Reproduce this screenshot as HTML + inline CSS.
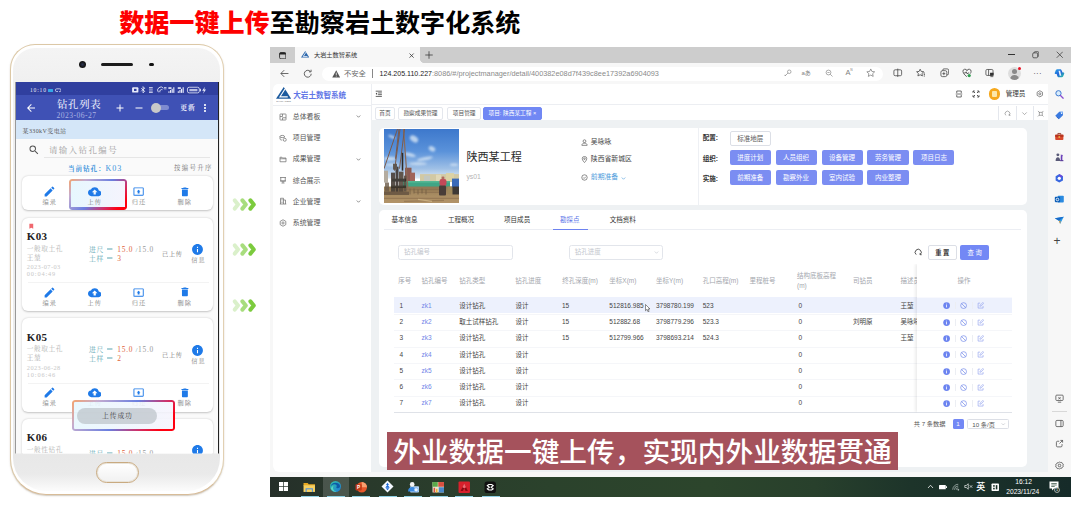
<!DOCTYPE html>
<html lang="zh-CN">
<head>
<meta charset="utf-8">
<title>数据一键上传至勘察岩土数字化系统</title>
<style>
*{box-sizing:border-box;margin:0;padding:0}
html,body{width:1080px;height:505px;overflow:hidden;background:#fff}
body{position:relative;font-family:"Liberation Sans","Noto Sans CJK SC",sans-serif;color:#333}
.abs{position:absolute}
.t{position:absolute;white-space:nowrap;line-height:1}
#title{left:119.2px;top:8px;font-size:25.08px;font-weight:700;letter-spacing:0;line-height:30px;color:#000}
#title b{color:#fe0000}

#phone{left:9.5px;top:44px;width:214.7px;height:450.5px;border-radius:25px 25px 36px 36px;background:#fff;border:1px solid #dcc8a6;border-right:1.400px solid #e2d0b2;border-bottom:1.4px solid #d8bc98;box-shadow:0 1px 1.5px rgba(120,100,70,.35)}
#panel{left:12.6px;top:47.6px;width:207.2px;height:443.6px;border-radius:22px 22px 33px 33px;background:linear-gradient(180deg,#f4f4f4 0,#f0f0f0 34px,#eaeaea 400px,#e8e8e8 408px,#eaeaea 426px,#f4f4f4 436px,#fcfcfc 443px)}
#screen{left:15px;top:81px;width:204px;height:372.6px;background:#fafafa;overflow:hidden;border-right:1px solid #222;border-left:.5px solid #999;clip-path:inset(1px 0 0 0);font-family:"Liberation Serif","Noto Serif CJK SC",serif}
#cam{left:78.500px;top:61px;width:7px;height:7px;border-radius:50%;background:radial-gradient(circle,#2a3350 0,#111 60%,#555 100%)}
#spk{left:101px;top:63px;width:32px;height:3px;border-radius:2px;background:#1c1c1c}
#sen{left:148.5px;top:63px;width:5px;height:3px;border-radius:2px;background:#111}
#home{left:95.5px;top:461.7px;width:43px;height:21px;border-radius:10.5px;border:1px solid #c9aa80;background:linear-gradient(180deg,#fff,#f1f1f1);box-shadow:inset 0 0 0 1px #e9e4da}
#screen .t{color:#777}
#sbar{left:0;top:0;width:203px;height:13.5px;background:#303f9f}
#abar{left:0;top:13.5px;width:203px;height:25.5px;background:#3f51b5}
#strip{left:0;top:39px;width:203px;height:18.7px;background:#d4e6f8}
.card{position:absolute;left:5.5px;width:191.5px;background:#fff;border-radius:6px;box-shadow:0 0.5px 2px rgba(0,0,0,.22)}
.ic{position:absolute;width:13px;height:13px;fill:#1f7ae8}
.lb{position:absolute;font-size:6.2px;color:#808080;white-space:nowrap;line-height:1;transform:translateX(-50%);letter-spacing:.9px}
.hl{position:absolute;border-radius:3px}
.hl::before{content:"";position:absolute;inset:0;border-radius:3px;padding:2.1px;background:linear-gradient(135deg,#f6a46c 0%,#c4acd0 20%,#6a7fe0 50%,#d03068 72%,#ff0010 88%,#ff0010 100%);-webkit-mask:linear-gradient(#000 0 0) content-box,linear-gradient(#000 0 0);-webkit-mask-composite:xor;mask-composite:exclude}
.arr{position:absolute;left:232px;width:24px;height:13px}


#win{left:270px;top:47px;width:801px;height:450px;background:#f7f7f7;overflow:hidden}
#win .t{color:#444}
#tabbar{left:0;top:0;width:801px;height:16.3px;background:#cdcdcd}
#atab{left:24.5px;top:0;width:125.1px;height:16.5px;background:#f7f7f7}
#atab::after{content:"";position:absolute;left:125.1px;top:12.3px;width:4px;height:4px;background:radial-gradient(circle at 100% 0,#cdcdcd 3.7px,#f7f7f7 4.1px)}
#tool{left:0;top:16.3px;width:801px;height:21px;background:#f7f7f7}
#addr{left:52.4px;top:19.7px;width:560.5px;height:14.6px;background:#fff;border-radius:7.3px}
#page{left:3px;top:37px;width:775px;height:388px;background:#eef1f3;border-radius:5px 0 0 6px;overflow:hidden}
#side{left:0;top:0;width:98px;height:388px;background:#fff}
#hdr{left:98px;top:0;width:677px;height:21.3px;background:#fff;border-bottom:.6px solid #eceef2;border-left:.6px solid #eceef2}
#tabs{left:98px;top:21.3px;width:677px;height:15px;background:#fff;border-left:.6px solid #eceef2}
.mi{position:absolute;left:19.8px;font-size:6.9px;color:#555;white-space:nowrap;line-height:1}
.mic{position:absolute;left:5.5px;width:8px;height:8px;stroke:#7a7a7a;fill:none;stroke-width:1.6}
.chev{position:absolute;left:83.1px;width:5px;height:5px;stroke:#555;fill:none;stroke-width:1.3}
.tb{position:absolute;top:23.3px;height:12.6px;border:.6px solid #e4e7ed;border-radius:2px;background:#fff;font-size:5.7px;color:#555;line-height:11.4px;text-align:center;white-space:nowrap}
.cardw{position:absolute;background:#fff;border-radius:5px}
.btn{position:absolute;width:41.2px;height:15.1px;border-radius:2px;background:#7b8df2;color:#fff;font-size:6.5px;line-height:15.1px;text-align:center;white-space:nowrap}
.th{position:absolute;font-size:6.5px;color:#a3a6ad;white-space:nowrap;line-height:1}
.td{position:absolute;font-size:6.5px;color:#444;white-space:nowrap;line-height:1}
.eic{position:absolute;left:784px;width:10.600px;height:10.600px}
#task{left:0;top:429.6px;width:801px;height:20px;background:linear-gradient(90deg,#252f29 0,#29392b 12%,#2b422c 35%,#2c452c 55%,#28402c 68%,#1d342a 80%,#162b29 100%)}
#cap{left:116.6px;top:384.6px;width:511.6px;height:38px;background:#a5525c;color:#fff;font-size:27.7px;font-weight:500;line-height:38px;padding-left:6.6px;padding-top:2.2px;overflow:hidden;white-space:nowrap;letter-spacing:0}

</style>
</head>
<body>
<div id="title" class="t"><b>数据一键上传</b>至勘察岩土数字化系统</div>
<div id="phone" class="abs"></div><div id="panel" class="abs"></div><div id="cam" class="abs"></div><div id="spk" class="abs"></div><div id="sen" class="abs"></div><div id="home" class="abs"></div>
<div id="screen" class="abs"><div id="sbar" class="abs"></div><div id="abar" class="abs"></div><div id="strip" class="abs"></div><div class="t" style="left:14px;top:6.6px;font-size:5.6px;color:#e4e7f7;letter-spacing:.8px">10:10</div><div class="abs" style="left:31.800px;top:7.700px;width:5.400px;height:3.200px;background:#35a7e8;border-radius:.5px"></div><svg class="abs" style="left:38.500px;top:7px;width:6.500px;height:4.600px" viewBox="0 0 13 9" fill="none" stroke="#e4e7f7" stroke-width="1.500"><path d="M3.500 1.500h6a2.500 2.500 0 0 1 0 5.500H8M6 7H3.500a2.500 2.500 0 0 1 0-5.500"/></svg><svg class="abs" style="left:115.700px;top:5px;width:74px;height:8px" viewBox="0 0 118 12.800" fill="#e8ebfa"><rect x="0" y="2" width="10" height="8.500" rx="1.500"/><rect x="3" y="4.500" width="4" height="3.500" fill="#303f9f"/><path d="M17.500 1l2.500 2.500-2.500 2.500 2.500 2.500-2.500 2.500V1zM14.500 3.500l5 5M14.500 8.500l5-5" stroke="#e8ebfa" stroke-width="1.300" fill="none"/><rect x="27" y="2" width="6" height="1.200"/><rect x="27" y="4.300" width="6" height="1.200"/><rect x="27" y="7.500" width="6" height="1.200"/><rect x="27" y="9.800" width="6" height="1.200"/><path d="M42 10a5 5 0 0 1 8-6.500M44.500 10a3 3 0 0 1 4-4" stroke="#e8ebfa" stroke-width="1.400" fill="none"/><rect x="51" y="2" width="4" height="1.200"/><rect x="51" y="4" width="4" height="1.200"/><rect x="58" y="2" width="5" height="2.600"/><rect x="58" y="8.500" width="1.800" height="2.500"/><rect x="60.600" y="6.500" width="1.800" height="4.500"/><rect x="63.200" y="4.500" width="1.800" height="6.500"/><rect x="65.800" y="2" width="1.800" height="9"/><rect x="73" y="2" width="5" height="2.600"/><rect x="73" y="8.500" width="1.800" height="2.500"/><rect x="75.600" y="6.500" width="1.800" height="4.500"/><rect x="78.200" y="4.500" width="1.800" height="6.500"/><rect x="80.800" y="2" width="1.800" height="9"/><rect x="88.500" y="2" width="19" height="9" rx="2.800" fill="none" stroke="#e8ebfa" stroke-width="1.300"/><rect x="91.500" y="4.600" width="13" height="3.800" rx="1" opacity=".75"/><rect x="108.500" y="4.500" width="1.500" height="4"/><path d="M116.500 1l-4.500 6.500h3l-1.500 5 4.800-7h-3z"/></svg><svg class="abs" style="left:9px;top:21px;width:12px;height:12px;fill:#fff" viewBox="0 0 24 24"><path d="M20 11H7.83l5.59-5.59L12 4l-8 8 8 8 1.41-1.41L7.83 13H20v-2z"/></svg><div class="t" style="left:41px;top:18.600px;font-size:10.400px;font-weight:500;color:#e9ecfa;letter-spacing:.7px">钻孔列表</div><div class="t" style="left:40.500px;top:31px;font-size:7.600px;color:#aab3e3;letter-spacing:.45px">2023-06-27</div><svg class="abs" style="left:98.200px;top:21px;width:12px;height:12px;fill:#fff" viewBox="0 0 24 24"><path d="M19 13h-6v6h-2v-6H5v-2h6V5h2v6h6v2z"/></svg><svg class="abs" style="left:116.700px;top:20.800px;width:12px;height:12px;fill:#fff" viewBox="0 0 24 24"><path d="M19 13H5v-2h14v2z"/></svg><div class="abs" style="left:139.500px;top:23.800px;width:13px;height:5.600px;border-radius:3px;background:#7f8bd0"></div><div class="abs" style="left:134.500px;top:21.700px;width:10px;height:10px;border-radius:50%;background:#c9c9c9"></div><div class="t" style="left:164.300px;top:23.800px;font-size:6.800px;font-weight:700;color:#e9ecfa;letter-spacing:.9px">更新</div><svg class="abs" style="left:183px;top:20.800px;width:12px;height:12px;fill:#fff" viewBox="0 0 24 24"><path d="M12 8c1.1 0 2-.9 2-2s-.9-2-2-2-2 .9-2 2 .9 2 2 2zm0 2c-1.1 0-2 .9-2 2s.9 2 2 2 2-.9 2-2-.9-2-2-2zm0 6c-1.1 0-2 .9-2 2s.9 2 2 2 2-.9 2-2-.9-2-2-2z"/></svg><div class="t" style="left:6.5px;top:46.500px;font-size:6px;color:#555;letter-spacing:.4px">某330kV变电站</div><svg class="abs" style="left:11.800px;top:62.500px;width:12px;height:12px;fill:#555" viewBox="0 0 24 24"><path d="M15.5 14h-.79l-.28-.27A6.471 6.471 0 0 0 16 9.500 6.500 6.500 0 1 0 9.500 16c1.610 0 3.090-.59 4.230-1.570l.27.28v.79l5 4.990L20.490 19l-4.990-5zm-6 0C7.010 14 5 11.990 5 9.500S7.010 5 9.500 5 14 7.010 14 9.500 11.990 14 9.500 14z"/></svg><div class="t" style="left:33px;top:65.5px;font-size:8.4px;color:#a0a0a0;letter-spacing:1.5px">请输入钻孔编号</div><div class="abs" style="left:27.5px;top:76.3px;width:166px;height:.6px;background:#e6e6e6"></div><div class="t" style="left:52px;top:83.800px;font-size:6.600px;font-weight:700;color:#3d94dc;letter-spacing:.9px">当前钻孔：<span style="font-size:8px;font-weight:400;letter-spacing:1px">K03</span></div><div class="t" style="left:158px;top:84px;font-size:6.400px;color:#777;letter-spacing:1.35px">按编号升序</div><div class="card" style="top:95px;height:34px"></div><div class="hl" style="left:53.3px;top:97.5px;width:58.1px;height:31px;background:linear-gradient(90deg,#e6f7fe,#f6f4fd)"></div><svg class="ic" style="left:27.0px;top:104.2px;width:13px;height:13px" viewBox="0 0 24 24"><path d="M3 17.25V21h3.75L17.81 9.94l-3.75-3.75L3 17.25zM20.71 7.04a.996.996 0 0 0 0-1.41l-2.34-2.34a.996.996 0 0 0-1.41 0l-1.83 1.83 3.75 3.75 1.83-1.83z"/></svg><div class="lb" style="left:33.7px;top:118.1px">编录</div><svg class="ic" style="left:71.8px;top:104.0px;width:13.4px;height:13.4px" viewBox="0 0 24 24"><path d="M19.35 10.04A7.49 7.49 0 0 0 12 4C9.11 4 6.6 5.64 5.35 8.04A5.994 5.994 0 0 0 0 14c0 3.31 2.69 6 6 6h13c2.76 0 5-2.24 5-5 0-2.64-2.05-4.78-4.65-4.96zM14 13v4h-4v-4H7l5-5 5 5h-3z"/></svg><div class="lb" style="left:78.7px;top:118.1px">上传</div><svg class="ic" style="left:117.1px;top:105.1px;width:11.2px;height:11.2px" viewBox="0 0 24 24"><path d="M21 3H3c-1.11 0-2 .89-2 2v14c0 1.11.89 2 2 2h18c1.11 0 2-.89 2-2V5c0-1.11-.89-2-2-2zm0 16.02H3V4.98h18v14.04zM10 12H8l4-4 4 4h-2v4h-4v-4z"/></svg><div class="lb" style="left:122.9px;top:118.1px">归还</div><svg class="ic" style="left:162.6px;top:104.8px;width:11.8px;height:11.8px" viewBox="0 0 24 24"><path d="M6 19c0 1.1.9 2 2 2h8c1.1 0 2-.9 2-2V7H6v12zM19 4h-3.5l-1-1h-5l-1 1H5v2h14V4z"/></svg><div class="lb" style="left:168.7px;top:118.1px">删除</div><div class="card" style="top:136.5px;height:93.5px"></div><div class="t" style="left:10.8px;top:150.1px;font-size:11px;font-weight:700;letter-spacing:.35px;color:#222">K03</div><div class="t" style="left:10.8px;top:164.7px;font-size:6.7px;color:#b0b0b0;letter-spacing:.55px">一般取土孔</div><div class="t" style="left:10.8px;top:173.7px;font-size:6.7px;color:#b0b0b0;letter-spacing:.55px">王堃</div><div class="t" style="left:10.8px;top:183.1px;font-size:6.3px;color:#c8c8c8;letter-spacing:.45px">2023-07-03</div><div class="t" style="left:10.8px;top:190.2px;font-size:6.3px;color:#c8c8c8;letter-spacing:.85px">00:04:49</div><div class="t" style="left:73px;top:164.5px;font-size:6.8px;letter-spacing:.7px;color:#5fa8b4">进尺 <span style="display:inline-block;transform:scale(1.7,1.3);margin:0 2px">=</span> <span style="color:#e0643c;font-size:7.4px">15.0</span> /<span style="color:#999;font-size:7.4px">15.0</span></div><div class="t" style="left:73px;top:173.5px;font-size:6.8px;letter-spacing:.7px;color:#5fa8b4">土样 <span style="display:inline-block;transform:scale(1.7,1.3);margin:0 2px">=</span> <span style="color:#e0643c;font-size:7.4px">3</span></div><div class="t" style="left:146px;top:170.0px;font-size:6.2px;letter-spacing:.7px;color:#777">已上传</div><svg class="ic" style="left:175.2px;top:162.0px" viewBox="0 0 24 24"><path d="M12 2C6.48 2 2 6.48 2 12s4.48 10 10 10 10-4.48 10-10S17.52 2 12 2zm1 15h-2v-6h2v6zm0-8h-2V7h2v2z"/></svg><div class="lb" style="left:182.4px;top:176.3px">信息</div><div class="abs" style="left:12px;top:201.0px;width:181px;height:.6px;background:#f3f3f3"></div><svg class="ic" style="left:27.0px;top:204.7px;width:13px;height:13px" viewBox="0 0 24 24"><path d="M3 17.25V21h3.75L17.81 9.94l-3.75-3.75L3 17.25zM20.71 7.04a.996.996 0 0 0 0-1.41l-2.34-2.34a.996.996 0 0 0-1.41 0l-1.83 1.83 3.75 3.75 1.83-1.83z"/></svg><div class="lb" style="left:33.7px;top:218.6px">编录</div><svg class="ic" style="left:71.8px;top:204.5px;width:13.4px;height:13.4px" viewBox="0 0 24 24"><path d="M19.35 10.04A7.49 7.49 0 0 0 12 4C9.11 4 6.6 5.64 5.35 8.04A5.994 5.994 0 0 0 0 14c0 3.31 2.69 6 6 6h13c2.76 0 5-2.24 5-5 0-2.64-2.05-4.78-4.65-4.96zM14 13v4h-4v-4H7l5-5 5 5h-3z"/></svg><div class="lb" style="left:78.7px;top:218.6px">上传</div><svg class="ic" style="left:117.1px;top:205.6px;width:11.2px;height:11.2px" viewBox="0 0 24 24"><path d="M21 3H3c-1.11 0-2 .89-2 2v14c0 1.11.89 2 2 2h18c1.11 0 2-.89 2-2V5c0-1.11-.89-2-2-2zm0 16.02H3V4.98h18v14.04zM10 12H8l4-4 4 4h-2v4h-4v-4z"/></svg><div class="lb" style="left:122.9px;top:218.6px">归还</div><svg class="ic" style="left:162.6px;top:205.3px;width:11.8px;height:11.8px" viewBox="0 0 24 24"><path d="M6 19c0 1.1.9 2 2 2h8c1.1 0 2-.9 2-2V7H6v12zM19 4h-3.5l-1-1h-5l-1 1H5v2h14V4z"/></svg><div class="lb" style="left:168.7px;top:218.6px">删除</div><svg class="abs" style="left:12.2px;top:142.2px;width:6.6px;height:6.6px;fill:#f0686e" viewBox="0 0 24 24"><path d="M5 3h14v18l-7-4-7 4z"/></svg><div class="card" style="top:237.1px;height:93.5px"></div><div class="t" style="left:10.8px;top:250.7px;font-size:11px;font-weight:700;letter-spacing:.35px;color:#222">K05</div><div class="t" style="left:10.8px;top:265.3px;font-size:6.7px;color:#b0b0b0;letter-spacing:.55px">一般取土孔</div><div class="t" style="left:10.8px;top:274.3px;font-size:6.7px;color:#b0b0b0;letter-spacing:.55px">王堃</div><div class="t" style="left:10.8px;top:283.7px;font-size:6.3px;color:#c8c8c8;letter-spacing:.45px">2023-06-28</div><div class="t" style="left:10.8px;top:290.8px;font-size:6.3px;color:#c8c8c8;letter-spacing:.85px">10:06:46</div><div class="t" style="left:73px;top:265.1px;font-size:6.8px;letter-spacing:.7px;color:#5fa8b4">进尺 <span style="display:inline-block;transform:scale(1.7,1.3);margin:0 2px">=</span> <span style="color:#e0643c;font-size:7.4px">15.0</span> /<span style="color:#999;font-size:7.4px">15.0</span></div><div class="t" style="left:73px;top:274.1px;font-size:6.8px;letter-spacing:.7px;color:#5fa8b4">土样 <span style="display:inline-block;transform:scale(1.7,1.3);margin:0 2px">=</span> <span style="color:#e0643c;font-size:7.4px">2</span></div><div class="t" style="left:146px;top:270.6px;font-size:6.2px;letter-spacing:.7px;color:#777">已上传</div><svg class="ic" style="left:175.2px;top:262.6px" viewBox="0 0 24 24"><path d="M12 2C6.48 2 2 6.48 2 12s4.48 10 10 10 10-4.48 10-10S17.52 2 12 2zm1 15h-2v-6h2v6zm0-8h-2V7h2v2z"/></svg><div class="lb" style="left:182.4px;top:276.9px">信息</div><div class="abs" style="left:12px;top:301.6px;width:181px;height:.6px;background:#f3f3f3"></div><svg class="ic" style="left:27.0px;top:305.3px;width:13px;height:13px" viewBox="0 0 24 24"><path d="M3 17.25V21h3.75L17.81 9.94l-3.75-3.75L3 17.25zM20.71 7.04a.996.996 0 0 0 0-1.41l-2.34-2.34a.996.996 0 0 0-1.41 0l-1.83 1.83 3.75 3.75 1.83-1.83z"/></svg><div class="lb" style="left:33.7px;top:319.2px">编录</div><svg class="ic" style="left:71.8px;top:305.1px;width:13.4px;height:13.4px" viewBox="0 0 24 24"><path d="M19.35 10.04A7.49 7.49 0 0 0 12 4C9.11 4 6.6 5.64 5.35 8.04A5.994 5.994 0 0 0 0 14c0 3.31 2.69 6 6 6h13c2.76 0 5-2.24 5-5 0-2.64-2.05-4.78-4.65-4.96zM14 13v4h-4v-4H7l5-5 5 5h-3z"/></svg><div class="lb" style="left:78.7px;top:319.2px">上传</div><svg class="ic" style="left:117.1px;top:306.2px;width:11.2px;height:11.2px" viewBox="0 0 24 24"><path d="M21 3H3c-1.11 0-2 .89-2 2v14c0 1.11.89 2 2 2h18c1.11 0 2-.89 2-2V5c0-1.11-.89-2-2-2zm0 16.02H3V4.98h18v14.04zM10 12H8l4-4 4 4h-2v4h-4v-4z"/></svg><div class="lb" style="left:122.9px;top:319.2px">归还</div><svg class="ic" style="left:162.6px;top:305.9px;width:11.8px;height:11.8px" viewBox="0 0 24 24"><path d="M6 19c0 1.1.9 2 2 2h8c1.1 0 2-.9 2-2V7H6v12zM19 4h-3.5l-1-1h-5l-1 1H5v2h14V4z"/></svg><div class="lb" style="left:168.7px;top:319.2px">删除</div><div class="card" style="top:337.8px;height:93.5px"></div><div class="t" style="left:10.8px;top:351.4px;font-size:11px;font-weight:700;letter-spacing:.35px;color:#222">K06</div><div class="t" style="left:10.8px;top:366.0px;font-size:6.7px;color:#b0b0b0;letter-spacing:.55px">一般性钻孔</div><div class="t" style="left:10.8px;top:375.0px;font-size:6.7px;color:#b0b0b0;letter-spacing:.55px">王堃</div><div class="t" style="left:10.8px;top:384.4px;font-size:6.3px;color:#c8c8c8;letter-spacing:.45px">2023-06-28</div><div class="t" style="left:10.8px;top:391.5px;font-size:6.3px;color:#c8c8c8;letter-spacing:.85px">10:30:12</div><div class="t" style="left:73px;top:369.4px;font-size:6.8px;letter-spacing:.7px;color:#5fa8b4">进尺 <span style="display:inline-block;transform:scale(1.7,1.3);margin:0 2px">=</span> <span style="color:#e0643c;font-size:7.4px">15.0</span> /<span style="color:#999;font-size:7.4px">15.0</span></div><div class="t" style="left:73px;top:378.4px;font-size:6.8px;letter-spacing:.7px;color:#5fa8b4">土样 <span style="display:inline-block;transform:scale(1.7,1.3);margin:0 2px">=</span> <span style="color:#e0643c;font-size:7.4px">2</span></div><div class="t" style="left:146px;top:374.9px;font-size:6.2px;letter-spacing:.7px;color:#777">已上传</div><svg class="ic" style="left:175.2px;top:363.3px" viewBox="0 0 24 24"><path d="M12 2C6.48 2 2 6.48 2 12s4.48 10 10 10 10-4.48 10-10S17.52 2 12 2zm1 15h-2v-6h2v6zm0-8h-2V7h2v2z"/></svg><div class="lb" style="left:182.4px;top:377.6px">信息</div><div class="abs" style="left:12px;top:402.3px;width:181px;height:.6px;background:#f3f3f3"></div><svg class="ic" style="left:27.0px;top:406.0px;width:13px;height:13px" viewBox="0 0 24 24"><path d="M3 17.25V21h3.75L17.81 9.94l-3.75-3.75L3 17.25zM20.71 7.04a.996.996 0 0 0 0-1.41l-2.34-2.34a.996.996 0 0 0-1.41 0l-1.83 1.83 3.75 3.75 1.83-1.83z"/></svg><div class="lb" style="left:33.7px;top:419.9px">编录</div><svg class="ic" style="left:71.8px;top:405.8px;width:13.4px;height:13.4px" viewBox="0 0 24 24"><path d="M19.35 10.04A7.49 7.49 0 0 0 12 4C9.11 4 6.6 5.64 5.35 8.04A5.994 5.994 0 0 0 0 14c0 3.31 2.69 6 6 6h13c2.76 0 5-2.24 5-5 0-2.64-2.05-4.78-4.65-4.96zM14 13v4h-4v-4H7l5-5 5 5h-3z"/></svg><div class="lb" style="left:78.7px;top:419.9px">上传</div><svg class="ic" style="left:117.1px;top:406.9px;width:11.2px;height:11.2px" viewBox="0 0 24 24"><path d="M21 3H3c-1.11 0-2 .89-2 2v14c0 1.11.89 2 2 2h18c1.11 0 2-.89 2-2V5c0-1.11-.89-2-2-2zm0 16.02H3V4.98h18v14.04zM10 12H8l4-4 4 4h-2v4h-4v-4z"/></svg><div class="lb" style="left:122.9px;top:419.9px">归还</div><svg class="ic" style="left:162.6px;top:406.6px;width:11.8px;height:11.8px" viewBox="0 0 24 24"><path d="M6 19c0 1.1.9 2 2 2h8c1.1 0 2-.9 2-2V7H6v12zM19 4h-3.5l-1-1h-5l-1 1H5v2h14V4z"/></svg><div class="lb" style="left:168.7px;top:419.9px">删除</div><div class="hl" style="left:56.2px;top:319.2px;width:103.2px;height:31.3px;background:linear-gradient(90deg,rgba(230,247,254,.88),rgba(246,244,253,.88))"></div><div class="abs" style="left:60.7px;top:326.8px;width:80.7px;height:16.2px;border-radius:8.1px;background:rgba(186,194,200,.7)"></div><div class="t" style="left:86px;top:332.2px;font-size:6.8px;color:#444;letter-spacing:.9px">上传成功</div></div>
<svg class="arr" style="top:197.6px" viewBox="0 0 24 13" fill="none" stroke-width="4" stroke-linecap="round" stroke-linejoin="round"><path d="M2.800 2.400L6 6.500 2.800 10.600" stroke="#daf0ca"/><path d="M10.400 2.400L13.800 6.500 10.400 10.600" stroke="#a8dd7e"/><path d="M18.400 2.400L21.800 6.500 18.400 10.600" stroke="#7ccb3e"/></svg><svg class="arr" style="top:243.4px" viewBox="0 0 24 13" fill="none" stroke-width="4" stroke-linecap="round" stroke-linejoin="round"><path d="M2.800 2.400L6 6.500 2.800 10.600" stroke="#daf0ca"/><path d="M10.400 2.400L13.800 6.500 10.400 10.600" stroke="#a8dd7e"/><path d="M18.400 2.400L21.800 6.500 18.400 10.600" stroke="#7ccb3e"/></svg><svg class="arr" style="top:298.8px" viewBox="0 0 24 13" fill="none" stroke-width="4" stroke-linecap="round" stroke-linejoin="round"><path d="M2.800 2.400L6 6.500 2.800 10.600" stroke="#daf0ca"/><path d="M10.400 2.400L13.800 6.500 10.400 10.600" stroke="#a8dd7e"/><path d="M18.400 2.400L21.800 6.500 18.400 10.600" stroke="#7ccb3e"/></svg>
<div id="win" class="abs"><div id="tabbar" class="abs"></div><div id="atab" class="abs"></div><svg class="abs" style="left:8.6px;top:4.8px;width:7.4px;height:7.4px" viewBox="0 0 16 16"><rect x="1.2" y="1.2" width="13.6" height="13.6" rx="3" fill="none" stroke="#222" stroke-width="1.8"/><path d="M1.2 5.5h13.6V4a2.8 2.8 0 0 0-2.8-2.8H4A2.8 2.8 0 0 0 1.2 4z" fill="#222"/></svg><svg class="abs" style="left:30.600px;top:4px;width:8.400px;height:7px" viewBox="0 0 30.400 25"><path d="M15.500 0L30.400 23.400H0z" fill="#2a66ac"/><path d="M18 4L8 19.600h15.500" fill="none" stroke="#fff" stroke-width="2.800"/></svg><div class="t" style="left:44px;top:4.8px;font-size:6.2px;color:#333">大岩土数智系统</div><svg class="abs" style="left:139.400px;top:5.800px;width:5.200px;height:5.200px" viewBox="0 0 10 10" fill="none" stroke="#333" stroke-width="1.500"><path d="M1 1l8 8M9 1l-8 8"/></svg><svg class="abs" style="left:155.200px;top:3.800px;width:8px;height:8px" viewBox="0 0 16 16" fill="none" stroke="#333" stroke-width="1.500"><path d="M8 .5v15M.5 8h15"/></svg><div class="abs" style="left:738px;top:7.300px;width:6.500px;height:.7px;background:#333"></div><svg class="abs" style="left:761.5px;top:4px;width:7.5px;height:7.5px" viewBox="0 0 16 16" fill="none" stroke="#333" stroke-width="1.5"><rect x="1.5" y="4" width="10.5" height="10.5" rx="2.5"/><path d="M4.5 4V3.5a2 2 0 0 1 2-2h6a2 2 0 0 1 2 2v6a2 2 0 0 1-2 2H12"/></svg><svg class="abs" style="left:785.5px;top:4px;width:7.5px;height:7.5px" viewBox="0 0 16 16" fill="none" stroke="#333" stroke-width="1.5"><path d="M1.5 1.5l13 13M14.5 1.5l-13 13"/></svg><div id="tool" class="abs"></div><div id="addr" class="abs"></div><svg class="abs" style="left:9.7px;top:22.2px;width:9px;height:9px" viewBox="0 0 16 16" fill="none" stroke="#444" stroke-width="1.4"><path d="M15 8H1.8M7.5 2L1.5 8l6 6"/></svg><svg class="abs" style="left:32.5px;top:22px;width:9.5px;height:9.5px" viewBox="0 0 16 16" fill="none" stroke="#444" stroke-width="1.4"><path d="M13.8 8a5.8 5.8 0 1 1-1.7-4.1"/><path d="M13.6 1.2v3.6H10" /></svg><svg class="abs" style="left:61.6px;top:22.8px;width:8.4px;height:7.8px" viewBox="0 0 16 15"><path d="M8 .5l7.6 14H.4z" fill="#555"/><rect x="7.3" y="5" width="1.4" height="5" fill="#fff"/><rect x="7.3" y="11" width="1.4" height="1.6" fill="#fff"/></svg><div class="t" style="left:74px;top:23.3px;font-size:7.3px;color:#6a6a6a">不安全</div><div class="abs" style="left:101.6px;top:22.4px;width:.7px;height:9px;background:#888"></div><div class="t" style="left:109.6px;top:23.2px;font-size:7.05px;color:#222">124.205.110.227<span style="color:#8a8a8a;font-size:7.33px">:8086/#/projectmanager/detail/400382e08d7f439c8ee17392a6904093</span></div><svg class="abs" style="left:513.8px;top:22.2px;width:8px;height:8px" viewBox="0 0 16 16" fill="none" stroke="#808080" stroke-width="1.3"><circle cx="10.5" cy="5.5" r="3.5"/><path d="M8 8L2 14v-2.5"/></svg><div class="t" style="left:531.6px;top:23.2px;font-size:6px;color:#808080;letter-spacing:-.3px">aあ</div><svg class="abs" style="left:554.6px;top:22.2px;width:8px;height:8px" viewBox="0 0 16 16" fill="none" stroke="#808080" stroke-width="1.3"><circle cx="7" cy="7" r="4.8"/><path d="M10.5 10.5L15 15M4.8 7h4.4"/></svg><div class="t" style="left:575.5px;top:22.4px;font-size:7.4px;color:#808080">A<span style="font-size:4.5px;vertical-align:top">ᴺ</span></div><svg class="abs" style="left:595.5px;top:21.4px;width:9.5px;height:9.5px" viewBox="0 0 16 16" fill="none" stroke="#808080" stroke-width="1.3"><path d="M8 1.6l2 4.3 4.6.5-3.4 3.2.9 4.6L8 11.9l-4.1 2.3.9-4.6L1.4 6.4 6 5.9z"/></svg><svg class="abs" style="left:623.0px;top:21.4px;width:9.5px;height:9.5px" viewBox="0 0 16 16" fill="none" stroke="#444" stroke-width="1.3"><rect x="1.5" y="3" width="13" height="10" rx="2.2"/><path d="M8 1v14"/></svg><svg class="abs" style="left:645.9px;top:21.4px;width:9.5px;height:9.5px" viewBox="0 0 16 16" fill="none" stroke="#444" stroke-width="1.3"><path d="M7 2l1.8 3.8 4.2.5-3 2.9.8 4.2L7 11.4l-3.8 2 .8-4.2-3-2.9 4.2-.5z"/><path d="M12.5 8.5h3M13 11h2.5M13 13.500h2.500"/></svg><svg class="abs" style="left:669.6px;top:21.4px;width:9.5px;height:9.5px" viewBox="0 0 16 16" fill="none" stroke="#444" stroke-width="1.3"><rect x="1.500" y="4.500" width="10" height="10" rx="2.5"/><path d="M4.500 4.500V3.800a2.300 2.300 0 0 1 2.300-2.300h5.400a2.300 2.300 0 0 1 2.300 2.300v5.400a2.300 2.300 0 0 1-2.300 2.300h-.7M6.500 7v5M4 9.500h5"/></svg><svg class="abs" style="left:692.1px;top:21.2px;width:10px;height:10px" viewBox="0 0 16 16" fill="none" stroke="#444" stroke-width="1.3"><path d="M8 14S1.500 9.800 1.500 5.600A3.300 3.300 0 0 1 8 4.500a3.300 3.300 0 0 1 6.500 1.100c0 1.200-.5 2.300-1.300 3.400"/><path d="M3 8h2.500l1.200-2 1.600 3.500L9.500 8h2"/><circle cx="11.500" cy="12" r="2.600" fill="#2e9e4f" stroke="none"/></svg><svg class="abs" style="left:715.2px;top:21.4px;width:9.5px;height:9.5px" viewBox="0 0 16 16" fill="none" stroke="#444" stroke-width="1.3"><rect x="1.500" y="2.500" width="12" height="10" rx="2"/><path d="M6 2.500v10"/><rect x="8.500" y="8" width="6" height="5" fill="#333" stroke="none"/><path d="M9 14.500h5" /></svg><div class="abs" style="left:737.8px;top:19.7px;width:13px;height:13px;border-radius:50%;background:#dedede;overflow:hidden"><div class="abs" style="left:4px;top:2.300px;width:5px;height:5px;border-radius:50%;background:#8a8a8a"></div><div class="abs" style="left:1.800px;top:8px;width:9.400px;height:8px;border-radius:4.500px 4.500px 0 0;background:#8a8a8a"></div></div><div class="abs" style="left:747.5px;top:19.6px;width:3.600px;height:3.600px;border-radius:50%;background:#e81123"></div><div class="t" style="left:763.2px;top:22.600px;font-size:8px;color:#444;letter-spacing:.2px">···</div><div id="page" class="abs"><div id="side" class="abs"></div><div id="hdr" class="abs"></div><div id="tabs" class="abs"></div><svg class="abs" style="left:2.900px;top:3px;width:16px;height:15px" viewBox="0 0 32 30"><path d="M15.500 0L30.400 23.400H0z" fill="#1c5a9e"/><path d="M18 4L8 19.600h15.500" fill="none" stroke="#fff" stroke-width="2.300"/><text x="0" y="29" font-size="4.600" fill="#777" textLength="30" lengthAdjust="spacingAndGlyphs" font-family="Liberation Sans,sans-serif">CHINAGEO</text></svg><div class="t" style="left:20.300px;top:8px;font-size:7.550px;font-weight:700;color:#6175e6">大岩土数智系统</div><div class="abs" style="left:0;top:21.300px;width:98px;height:.6px;background:#eceef2"></div><svg class="mic" style="top:28.9px" viewBox="0 0 16 16"><rect x="2" y="2" width="12" height="12" rx="1"/><path d="M2 7h5V2M7 14V9.500h7"/></svg><div class="mi" style="top:30.2px">总体看板</div><svg class="chev" style="top:30.4px" viewBox="0 0 10 10"><path d="M1.500 3l3.500 3.500L8.500 3"/></svg><svg class="mic" style="top:50.0px" viewBox="0 0 16 16"><ellipse cx="6.500" cy="5" rx="4.500" ry="2.200"/><path d="M2 5v5c0 1.200 2 2.200 4.500 2.200M11 5v2"/><circle cx="11.500" cy="11.500" r="3"/></svg><div class="mi" style="top:51.3px">项目管理</div><svg class="mic" style="top:71.1px" viewBox="0 0 16 16"><path d="M2 4.500h4l1 1.500h7v7.500H2zM2 7.500h12"/></svg><div class="mi" style="top:72.4px">成果管理</div><svg class="chev" style="top:72.6px" viewBox="0 0 10 10"><path d="M1.500 3l3.500 3.500L8.500 3"/></svg><svg class="mic" style="top:92.3px" viewBox="0 0 16 16"><path d="M2 3h12M3.500 3v7h9V3M2 10h12M8 10v4M5 14h6"/></svg><div class="mi" style="top:93.6px">综合展示</div><svg class="mic" style="top:113.4px" viewBox="0 0 16 16"><path d="M3 14V2.500h6V14M9 6h4v8M1.500 14h13M5 5h2M5 8h2M5 11h2"/></svg><div class="mi" style="top:114.7px">企业管理</div><svg class="chev" style="top:114.9px" viewBox="0 0 10 10"><path d="M1.500 3l3.500 3.500L8.500 3"/></svg><svg class="mic" style="top:134.5px" viewBox="0 0 16 16"><path d="M8 1.500l5.600 3.200v6.600L8 14.500l-5.600-3.200V4.700z"/><circle cx="8" cy="8" r="2.200"/></svg><div class="mi" style="top:135.8px">系统管理</div><svg class="abs" style="left:102.400px;top:6.400px;width:7.600px;height:7.600px" viewBox="0 0 16 16" fill="none" stroke="#333" stroke-width="1.600"><path d="M1.500 2.500h13M6.500 6.200h8M6.500 9.800h8M1.500 13.500h13"/><path d="M4.500 5.500L1.500 8l3 2.500z" fill="#333" stroke="none"/></svg><svg class="abs" style="left:682.2px;top:5.9px;width:8px;height:8px" viewBox="0 0 16 16" fill="none" stroke="#444" stroke-width="1.5"><path d="M3.500 6V2h9v4M3.500 10v4h9v-4M1.500 8h13"/></svg><svg class="abs" style="left:698.6px;top:5.9px;width:8px;height:8px" viewBox="0 0 16 16" fill="none" stroke="#444" stroke-width="1.5"><path d="M2 5.500V2h3.500M10.500 2H14v3.500M14 10.500V14h-3.500M5.500 14H2v-3.500M2.500 2.500L6 6M13.500 2.500L10 6M13.500 13.500L10 10M2.500 13.500L6 10" stroke-width="1.800"/></svg><div class="abs" style="left:715.8px;top:4.2px;width:11.400px;height:11.400px;border-radius:50%;background:#f6a81c"></div><div class="abs" style="left:718.9px;top:7.0px;width:5.200px;height:5.800px;border-radius:1px;background:#fce7a8"></div><div class="t" style="left:732.7px;top:6.600px;font-size:6.600px;color:#333">管理员</div><svg class="abs" style="left:762.6px;top:6.1px;width:7.6px;height:7.6px" viewBox="0 0 16 16" fill="none" stroke="#555" stroke-width="1.4"><path d="M8 1.500l5.600 3.200v6.600L8 14.500l-5.600-3.200V4.700z"/><circle cx="8" cy="8" r="2.200"/></svg><div class="tb" style="left:102.0px;width:20.0px">首页</div><div class="tb" style="left:125.0px;width:45.0px">勘察成果管理</div><div class="tb" style="left:173.9px;width:34.6px">项目管理</div><div class="tb" style="left:210.2px;width:58.500px;background:#7188f4;border-color:#7188f4;color:#fff">项目: 陕西某工程 ×</div><div class="abs" style="left:725.4px;top:21.900px;width:.6px;height:14.400px;background:#e4e7ed"></div><div class="abs" style="left:742.6px;top:21.900px;width:.6px;height:14.400px;background:#e4e7ed"></div><div class="abs" style="left:759.5px;top:21.900px;width:.6px;height:14.400px;background:#e4e7ed"></div><svg class="abs" style="left:730.5px;top:26.2px;width:7px;height:7px" viewBox="0 0 16 16" fill="none" stroke="#777" stroke-width="1.3"><path d="M4.200 12.200A5.500 5.500 0 1 1 11.800 12.200"/><path d="M11.800 9v3.400h3" stroke-width="1.200"/></svg><svg class="abs" style="left:747.5px;top:26.2px;width:7px;height:7px" viewBox="0 0 16 16" fill="none" stroke="#777" stroke-width="1.3"><path d="M3 5.500l5 5 5-5"/></svg><svg class="abs" style="left:764.1px;top:26.0px;width:7.4px;height:7.4px" viewBox="0 0 16 16" fill="none" stroke="#777" stroke-width="1.3"><path d="M2 2l3 3M14 2l-3 3M2 14l3-3M14 14l-3-3"/><rect x="4.800" y="4.800" width="6.400" height="6.400"/></svg><div class="cardw" style="left:106px;top:44px;width:648.400px;height:77px"></div><svg class="abs" style="left:111px;top:44.600px;width:75px;height:74.400px" viewBox="0 0 75 75" preserveAspectRatio="none">
<defs><linearGradient id="sky" x1="0" y1="0" x2="0" y2="1"><stop offset="0" stop-color="#3d78cc"/><stop offset=".45" stop-color="#5a92da"/><stop offset=".8" stop-color="#9fc0e6"/><stop offset="1" stop-color="#dfeaf4"/></linearGradient>
<linearGradient id="gnd" x1="0" y1="0" x2="0" y2="1"><stop offset="0" stop-color="#8f7752"/><stop offset=".5" stop-color="#a88c62"/><stop offset="1" stop-color="#b39468"/></linearGradient>
<filter id="bl" x="-20%" y="-20%" width="140%" height="140%"><feGaussianBlur stdDeviation="1.100"/></filter><filter id="bl2" x="-10%" y="-10%" width="120%" height="120%"><feGaussianBlur stdDeviation=".45"/></filter></defs>
<rect width="75" height="50" fill="url(#sky)"/>
<g filter="url(#bl)" fill="#d4e4f4" opacity=".8"><ellipse cx="30" cy="10" rx="4.500" ry="3" transform="rotate(35 30 10)"/><ellipse cx="48" cy="20" rx="3.500" ry="2.500" transform="rotate(30 48 20)"/><ellipse cx="41" cy="30" rx="8" ry="1.600" transform="rotate(-12 41 30)"/><ellipse cx="26" cy="26" rx="6" ry="1.800" transform="rotate(15 26 26)"/><ellipse cx="34" cy="35" rx="9" ry="1.500"/><ellipse cx="6" cy="30" rx="6" ry="2"/><ellipse cx="8" cy="36" rx="7" ry="1.500"/><ellipse cx="70" cy="36" rx="4" ry="1.300"/><ellipse cx="8" cy="8" rx="4" ry="1.300" transform="rotate(25 8 8)"/></g>
<g filter="url(#bl2)">
<rect x="36" y="45.500" width="39" height="8" fill="#d2c9a4"/><rect x="40" y="47" width="6" height="6" fill="#c4c8c0"/><rect x="52" y="46" width="5" height="7" fill="#e0d8b8"/><rect x="62" y="44.500" width="8" height="8" fill="#dcd2a4"/>
<rect x="21" y="39" width="6.500" height="15" fill="#8a5a52"/><rect x="26" y="44" width="5" height="10" fill="#a06458"/><rect x="0" y="42" width="4" height="12" fill="#b4aca0"/>
<rect x="19" y="52.500" width="47" height="6.500" fill="#3fa585"/><rect x="19" y="52.500" width="47" height="1.500" fill="#57b894"/>
<rect x="0" y="58" width="75" height="17" fill="url(#gnd)"/>
<path d="M22 61h40M30 64h30M0 70h75M20 73l40-1" stroke="#86694a" stroke-width="1.300" opacity=".55"/>
<path d="M34 71l14 2" stroke="#c8ae80" stroke-width="1.200"/>
<path d="M13.500 0L0 40M16 0L10.500 42M15 0l-3.500 30" stroke="#7a5a4c" stroke-width="1" fill="none"/><path d="M19.500 0l4.500 62" stroke="#8a6a58" stroke-width="1.200"/><path d="M20.500 0l-5 40" stroke="#7a5a4c" stroke-width="1"/>
<path d="M18.500 24v18" stroke="#2e2a28" stroke-width="1.600"/>
<g opacity=".9"><rect x="7" y="44" width="4" height="20" fill="#4a4038"/><rect x="11.500" y="38" width="3" height="27" fill="#3e3630"/><rect x="15" y="43" width="4.500" height="22" fill="#54463a"/><rect x="20" y="47" width="2.500" height="16" fill="#5e5044"/><rect x="8" y="50" width="14" height="3" fill="#2e2a26"/><rect x="7" y="57" width="15" height="2.500" fill="#342e28"/><rect x="9" y="35" width="4" height="6" fill="#5a5048"/></g><rect x="0" y="63" width="25" height="3.500" fill="#6e5a44"/><rect x="1" y="54" width="4" height="9" fill="#6a5a48" opacity=".8"/><path d="M26 60v6M30 60v5M34 61v5M38 60v5M42 61v5" stroke="#7a6448" stroke-width="1"/>
<rect x="55.500" y="50.500" width="7" height="7" rx="2.200" fill="#c44a58"/><circle cx="59" cy="49.500" r="1.500" fill="#b06a60"/><rect x="55" y="57" width="7" height="10" rx="1" fill="#4a3e38"/>
<rect x="63.500" y="58" width="4.500" height="7" fill="#a08a5c"/><rect x="68" y="50" width="7" height="9" fill="#3a6ab8"/><rect x="68.500" y="58" width="6.500" height="8" fill="#3c3834"/>
</g>
</svg><div class="t" style="left:193.400px;top:67.600px;font-size:11.100px;color:#2b2b2b">陕西某工程</div><div class="t" style="left:193.400px;top:89.600px;font-size:6.800px;color:#b4b4b4">ys01</div><div class="abs" style="left:425.2px;top:44px;width:.6px;height:77px;background:#eef0f4"></div><svg class="abs" style="left:307.8px;top:54.7px;width:7px;height:7px" viewBox="0 0 16 16" fill="none" stroke="#555" stroke-width="1.500"><circle cx="8" cy="5" r="3.200"/><path d="M2 14.500c0-3.500 2.500-5 6-5s6 1.500 6 5z"/></svg><div class="t" style="left:317.8px;top:54.7px;font-size:6.850px;color:#444">吴咏咏</div><svg class="abs" style="left:307.8px;top:72.0px;width:7px;height:7px" viewBox="0 0 16 16" fill="none" stroke="#555" stroke-width="1.500"><path d="M8 15S2.800 9.800 2.800 6.200a5.200 5.200 0 0 1 10.400 0C13.200 9.800 8 15 8 15z"/><circle cx="8" cy="6.200" r="1.800"/></svg><div class="t" style="left:317.8px;top:72.2px;font-size:6.850px;color:#444">陕西省新城区</div><svg class="abs" style="left:307.8px;top:89.9px;width:7px;height:7px" viewBox="0 0 16 16" fill="none" stroke="#555" stroke-width="1.500"><circle cx="8" cy="8" r="6.200"/><path d="M5 8l2.200 2.200L11 6.300"/></svg><div class="t" style="left:317.8px;top:90.3px;font-size:6.850px;color:#4f9ddc">前期准备</div><svg class="abs" style="left:348.3px;top:91.8px;width:5px;height:5px" viewBox="0 0 10 10" fill="none" stroke="#4f9ddc" stroke-width="1.300"><path d="M1.500 3l3.500 3.500L8.500 3"/></svg><div class="t" style="left:429.7px;top:51.2px;font-size:6.600px;font-weight:700;color:#333">配置:</div><div class="t" style="left:429.7px;top:71.8px;font-size:6.600px;font-weight:700;color:#333">组织:</div><div class="t" style="left:429.7px;top:91.5px;font-size:6.600px;font-weight:700;color:#333">实施:</div><div class="btn" style="left:456.6px;top:46.6px;background:#fff;border:.6px solid #dcdfe6;color:#555;line-height:14px">标准地层</div><div class="btn" style="left:456.6px;top:66.4px">进度计划</div><div class="btn" style="left:502.5px;top:66.4px">人员组织</div><div class="btn" style="left:548.5px;top:66.4px">设备管理</div><div class="btn" style="left:594.4px;top:66.4px">劳务管理</div><div class="btn" style="left:640.3px;top:66.4px">项目日志</div><div class="btn" style="left:456.6px;top:86.2px">前期准备</div><div class="btn" style="left:502.5px;top:86.2px">勘察外业</div><div class="btn" style="left:548.5px;top:86.2px">室内试验</div><div class="btn" style="left:594.4px;top:86.2px">内业整理</div><div class="cardw" style="left:106px;top:125.600px;width:648.400px;height:257.400px"></div><div class="t" style="left:118.4px;top:132.5px;font-size:6.550px;color:#333">基本信息</div><div class="t" style="left:174.9px;top:132.5px;font-size:6.550px;color:#333">工程概况</div><div class="t" style="left:231.0px;top:132.5px;font-size:6.550px;color:#333">项目成员</div><div class="t" style="left:287.0px;top:132.5px;font-size:6.550px;color:#5b73e8">勘探点</div><div class="t" style="left:336.7px;top:132.5px;font-size:6.550px;color:#333">文档资料</div><div class="abs" style="left:111.0px;top:145.1px;width:637px;height:.7px;background:#eceef3"></div><div class="abs" style="left:280.0px;top:144.8px;width:34.500px;height:1.100px;background:#6d82f0"></div><div class="abs" style="left:125.4px;top:161.2px;width:114.200px;height:14.800px;border:.7px solid #e2e5eb;border-radius:2.500px;background:#fff"></div><div class="t" style="left:131.0px;top:165.3px;font-size:6.500px;color:#c3c6cd">钻孔编号</div><div class="abs" style="left:295.9px;top:161.2px;width:94.100px;height:14.800px;border:.7px solid #e2e5eb;border-radius:2.500px;background:#fff"></div><div class="t" style="left:301.8px;top:165.3px;font-size:6.500px;color:#c3c6cd">钻孔进度</div><svg class="abs" style="left:380.5px;top:166.4px;width:5px;height:5px" viewBox="0 0 10 10" fill="none" stroke="#c0c4cc" stroke-width="1.200"><path d="M1.500 3l3.500 3.500L8.500 3"/></svg><svg class="abs" style="left:640.5px;top:163.6px;width:8.4px;height:8.4px" viewBox="0 0 16 16" fill="none" stroke="#333" stroke-width="1.6"><path d="M4.200 12.600A5.800 5.800 0 1 1 11.800 12.600"/><path d="M11.600 9.400v3.400h3.200" stroke-width="1.300"/></svg><div class="abs" style="left:654.6px;top:160.7px;width:29.300px;height:15.500px;border:.7px solid #dcdfe6;border-radius:2px;background:#fff;font-size:6.300px;font-weight:700;letter-spacing:1.600px;text-indent:1.600px;line-height:14.200px;text-align:center;color:#333">重置</div><div class="abs" style="left:687.0px;top:160.7px;width:29.300px;height:15.500px;border-radius:2px;background:#7388f5;font-size:6.300px;letter-spacing:1.600px;text-indent:1.600px;line-height:15.500px;text-align:center;color:#fff">查询</div><div class="th" style="left:125.2px;top:193.5px">序号</div><div class="th" style="left:148.5px;top:193.5px">钻孔编号</div><div class="th" style="left:186.2px;top:193.5px">钻孔类型</div><div class="th" style="left:242.2px;top:193.5px">钻孔进度</div><div class="th" style="left:289.2px;top:193.5px">终孔深度(m)</div><div class="th" style="left:336.3px;top:193.5px">坐标X(m)</div><div class="th" style="left:383.0px;top:193.5px">坐标Y(m)</div><div class="th" style="left:429.7px;top:193.5px">孔口高程(m)</div><div class="th" style="left:476.4px;top:193.5px">里程桩号</div><div class="th" style="left:580.0px;top:193.5px">司钻员</div><div class="th" style="left:627.6px;top:193.5px">描述员</div><div class="th" style="left:524.0px;top:188.7px">结构底板高程</div><div class="th" style="left:524.0px;top:199.0px">(m)</div><div class="abs" style="left:120.9px;top:213.2px;width:618.400px;height:16.300px;background:#edf1fd"></div><div class="td" style="left:126.5px;top:218.6px;color:#444">1</div><div class="td" style="left:148.6px;top:218.6px;color:#7086e8">zk1</div><div class="td" style="left:186.2px;top:218.6px;color:#444">设计钻孔</div><div class="td" style="left:242.4px;top:218.6px;color:#444">设计</div><div class="td" style="left:289.0px;top:218.6px;color:#444">15</div><div class="td" style="left:336.3px;top:218.6px;color:#444">512816.985</div><div class="td" style="left:383.0px;top:218.6px;color:#444">3798780.199</div><div class="td" style="left:429.7px;top:218.6px;color:#444">523</div><div class="td" style="left:525.5px;top:218.6px;color:#444">0</div><div class="td" style="left:627.6px;top:218.6px;color:#444">王堃</div><div class="td" style="left:126.5px;top:234.9px;color:#444">2</div><div class="td" style="left:148.6px;top:234.9px;color:#7086e8">zk2</div><div class="td" style="left:186.2px;top:234.9px;color:#444">取土试样钻孔</div><div class="td" style="left:242.4px;top:234.9px;color:#444">设计</div><div class="td" style="left:289.0px;top:234.9px;color:#444">15</div><div class="td" style="left:336.3px;top:234.9px;color:#444">512882.68</div><div class="td" style="left:383.0px;top:234.9px;color:#444">3798779.296</div><div class="td" style="left:429.7px;top:234.9px;color:#444">523.3</div><div class="td" style="left:525.5px;top:234.9px;color:#444">0</div><div class="td" style="left:580.0px;top:234.9px;color:#444">刘明原</div><div class="td" style="left:627.6px;top:234.9px;color:#444">吴咏咏</div><div class="abs" style="left:120.9px;top:230.0px;width:618.400px;height:.6px;background:#f5f6f9"></div><div class="td" style="left:126.5px;top:251.2px;color:#444">3</div><div class="td" style="left:148.6px;top:251.2px;color:#7086e8">zk3</div><div class="td" style="left:186.2px;top:251.2px;color:#444">设计钻孔</div><div class="td" style="left:242.4px;top:251.2px;color:#444">设计</div><div class="td" style="left:289.0px;top:251.2px;color:#444">15</div><div class="td" style="left:336.3px;top:251.2px;color:#444">512799.966</div><div class="td" style="left:383.0px;top:251.2px;color:#444">3798693.214</div><div class="td" style="left:429.7px;top:251.2px;color:#444">524.3</div><div class="td" style="left:525.5px;top:251.2px;color:#444">0</div><div class="td" style="left:627.6px;top:251.2px;color:#444">王堃</div><div class="abs" style="left:120.9px;top:246.3px;width:618.400px;height:.6px;background:#f5f6f9"></div><div class="td" style="left:126.5px;top:267.5px;color:#444">4</div><div class="td" style="left:148.6px;top:267.5px;color:#7086e8">zk4</div><div class="td" style="left:186.2px;top:267.5px;color:#444">设计钻孔</div><div class="td" style="left:242.4px;top:267.5px;color:#444">设计</div><div class="td" style="left:525.5px;top:267.5px;color:#444">0</div><div class="abs" style="left:120.9px;top:262.6px;width:618.400px;height:.6px;background:#f5f6f9"></div><div class="td" style="left:126.5px;top:283.8px;color:#444">5</div><div class="td" style="left:148.6px;top:283.8px;color:#7086e8">zk5</div><div class="td" style="left:186.2px;top:283.8px;color:#444">设计钻孔</div><div class="td" style="left:242.4px;top:283.8px;color:#444">设计</div><div class="td" style="left:525.5px;top:283.8px;color:#444">0</div><div class="abs" style="left:120.9px;top:278.9px;width:618.400px;height:.6px;background:#f5f6f9"></div><div class="td" style="left:126.5px;top:300.1px;color:#444">6</div><div class="td" style="left:148.6px;top:300.1px;color:#7086e8">zk6</div><div class="td" style="left:186.2px;top:300.1px;color:#444">设计钻孔</div><div class="td" style="left:242.4px;top:300.1px;color:#444">设计</div><div class="td" style="left:525.5px;top:300.1px;color:#444">0</div><div class="abs" style="left:120.9px;top:295.2px;width:618.400px;height:.6px;background:#f5f6f9"></div><div class="td" style="left:126.5px;top:316.4px;color:#444">7</div><div class="td" style="left:148.6px;top:316.4px;color:#7086e8">zk7</div><div class="td" style="left:186.2px;top:316.4px;color:#444">设计钻孔</div><div class="td" style="left:242.4px;top:316.4px;color:#444">设计</div><div class="td" style="left:525.5px;top:316.4px;color:#444">0</div><div class="abs" style="left:120.9px;top:311.5px;width:618.400px;height:.6px;background:#f5f6f9"></div><div class="abs" style="left:120.9px;top:328.4px;width:618.400px;height:.7px;background:#dfe2e8"></div><div class="abs" style="left:643.5px;top:180.0px;width:95.800px;height:148.400px;background:linear-gradient(#fff,#fff) 0 0/100% 33.600px no-repeat,linear-gradient(#edf1fd,#edf1fd) 0 33.200px/100% 16.300px no-repeat,#fff;box-shadow:-2.500px 0 3px rgba(0,0,0,.09);clip-path:inset(0 0 0 -8px)"></div><div class="th" style="left:684.5px;top:193.5px">操作</div><svg class="abs" style="left:670.0px;top:218.3px;width:7.200px;height:7.200px" viewBox="0 0 16 16"><circle cx="8" cy="8" r="7.500" fill="#6c84f0"/><rect x="7.100" y="6.800" width="1.800" height="5.200" fill="#fff"/><rect x="7.100" y="3.800" width="1.800" height="1.800" fill="#fff"/></svg><div class="abs" style="left:682.2px;top:218.4px;width:.5px;height:7px;background:#eceef3"></div><svg class="abs" style="left:687.0px;top:218.3px;width:7.200px;height:7.200px" viewBox="0 0 16 16" fill="none" stroke="#7086e8" stroke-width="1.500"><circle cx="8" cy="8" r="6.500"/><path d="M3.500 3.500l9 9"/></svg><div class="abs" style="left:699.2px;top:218.4px;width:.5px;height:7px;background:#eceef3"></div><svg class="abs" style="left:704.0px;top:218.3px;width:7.200px;height:7.200px" viewBox="0 0 16 16" fill="none" stroke="#8fa0ee" stroke-width="1.400"><path d="M13.500 9v4.500h-11v-11H7"/><path d="M6.500 9.500l.5-2.500 6-6 2 2-6 6z"/></svg><div class="abs" style="left:643.5px;top:230.0px;width:95.800px;height:.6px;background:#f5f6f9"></div><svg class="abs" style="left:670.0px;top:234.6px;width:7.200px;height:7.200px" viewBox="0 0 16 16"><circle cx="8" cy="8" r="7.500" fill="#6c84f0"/><rect x="7.100" y="6.800" width="1.800" height="5.200" fill="#fff"/><rect x="7.100" y="3.800" width="1.800" height="1.800" fill="#fff"/></svg><div class="abs" style="left:682.2px;top:234.7px;width:.5px;height:7px;background:#eceef3"></div><svg class="abs" style="left:687.0px;top:234.6px;width:7.200px;height:7.200px" viewBox="0 0 16 16" fill="none" stroke="#7086e8" stroke-width="1.500"><circle cx="8" cy="8" r="6.500"/><path d="M3.500 3.500l9 9"/></svg><div class="abs" style="left:699.2px;top:234.7px;width:.5px;height:7px;background:#eceef3"></div><svg class="abs" style="left:704.0px;top:234.6px;width:7.200px;height:7.200px" viewBox="0 0 16 16" fill="none" stroke="#8fa0ee" stroke-width="1.400"><path d="M13.500 9v4.500h-11v-11H7"/><path d="M6.500 9.500l.5-2.500 6-6 2 2-6 6z"/></svg><div class="abs" style="left:643.5px;top:246.3px;width:95.800px;height:.6px;background:#f5f6f9"></div><svg class="abs" style="left:670.0px;top:250.9px;width:7.200px;height:7.200px" viewBox="0 0 16 16"><circle cx="8" cy="8" r="7.500" fill="#6c84f0"/><rect x="7.100" y="6.800" width="1.800" height="5.200" fill="#fff"/><rect x="7.100" y="3.800" width="1.800" height="1.800" fill="#fff"/></svg><div class="abs" style="left:682.2px;top:251.0px;width:.5px;height:7px;background:#eceef3"></div><svg class="abs" style="left:687.0px;top:250.9px;width:7.200px;height:7.200px" viewBox="0 0 16 16" fill="none" stroke="#7086e8" stroke-width="1.500"><circle cx="8" cy="8" r="6.500"/><path d="M3.500 3.500l9 9"/></svg><div class="abs" style="left:699.2px;top:251.0px;width:.5px;height:7px;background:#eceef3"></div><svg class="abs" style="left:704.0px;top:250.9px;width:7.200px;height:7.200px" viewBox="0 0 16 16" fill="none" stroke="#8fa0ee" stroke-width="1.400"><path d="M13.500 9v4.500h-11v-11H7"/><path d="M6.500 9.500l.5-2.500 6-6 2 2-6 6z"/></svg><div class="abs" style="left:643.5px;top:262.6px;width:95.800px;height:.6px;background:#f5f6f9"></div><svg class="abs" style="left:670.0px;top:267.2px;width:7.200px;height:7.200px" viewBox="0 0 16 16"><circle cx="8" cy="8" r="7.500" fill="#6c84f0"/><rect x="7.100" y="6.800" width="1.800" height="5.200" fill="#fff"/><rect x="7.100" y="3.800" width="1.800" height="1.800" fill="#fff"/></svg><div class="abs" style="left:682.2px;top:267.3px;width:.5px;height:7px;background:#eceef3"></div><svg class="abs" style="left:687.0px;top:267.2px;width:7.200px;height:7.200px" viewBox="0 0 16 16" fill="none" stroke="#7086e8" stroke-width="1.500"><circle cx="8" cy="8" r="6.500"/><path d="M3.500 3.500l9 9"/></svg><div class="abs" style="left:699.2px;top:267.3px;width:.5px;height:7px;background:#eceef3"></div><svg class="abs" style="left:704.0px;top:267.2px;width:7.200px;height:7.200px" viewBox="0 0 16 16" fill="none" stroke="#8fa0ee" stroke-width="1.400"><path d="M13.500 9v4.500h-11v-11H7"/><path d="M6.500 9.500l.5-2.500 6-6 2 2-6 6z"/></svg><div class="abs" style="left:643.5px;top:278.9px;width:95.800px;height:.6px;background:#f5f6f9"></div><svg class="abs" style="left:670.0px;top:283.5px;width:7.200px;height:7.200px" viewBox="0 0 16 16"><circle cx="8" cy="8" r="7.500" fill="#6c84f0"/><rect x="7.100" y="6.800" width="1.800" height="5.200" fill="#fff"/><rect x="7.100" y="3.800" width="1.800" height="1.800" fill="#fff"/></svg><div class="abs" style="left:682.2px;top:283.6px;width:.5px;height:7px;background:#eceef3"></div><svg class="abs" style="left:687.0px;top:283.5px;width:7.200px;height:7.200px" viewBox="0 0 16 16" fill="none" stroke="#7086e8" stroke-width="1.500"><circle cx="8" cy="8" r="6.500"/><path d="M3.500 3.500l9 9"/></svg><div class="abs" style="left:699.2px;top:283.6px;width:.5px;height:7px;background:#eceef3"></div><svg class="abs" style="left:704.0px;top:283.5px;width:7.200px;height:7.200px" viewBox="0 0 16 16" fill="none" stroke="#8fa0ee" stroke-width="1.400"><path d="M13.500 9v4.500h-11v-11H7"/><path d="M6.500 9.500l.5-2.500 6-6 2 2-6 6z"/></svg><div class="abs" style="left:643.5px;top:295.2px;width:95.800px;height:.6px;background:#f5f6f9"></div><svg class="abs" style="left:670.0px;top:299.8px;width:7.200px;height:7.200px" viewBox="0 0 16 16"><circle cx="8" cy="8" r="7.500" fill="#6c84f0"/><rect x="7.100" y="6.800" width="1.800" height="5.200" fill="#fff"/><rect x="7.100" y="3.800" width="1.800" height="1.800" fill="#fff"/></svg><div class="abs" style="left:682.2px;top:299.9px;width:.5px;height:7px;background:#eceef3"></div><svg class="abs" style="left:687.0px;top:299.8px;width:7.200px;height:7.200px" viewBox="0 0 16 16" fill="none" stroke="#7086e8" stroke-width="1.500"><circle cx="8" cy="8" r="6.500"/><path d="M3.500 3.500l9 9"/></svg><div class="abs" style="left:699.2px;top:299.9px;width:.5px;height:7px;background:#eceef3"></div><svg class="abs" style="left:704.0px;top:299.8px;width:7.200px;height:7.200px" viewBox="0 0 16 16" fill="none" stroke="#8fa0ee" stroke-width="1.400"><path d="M13.500 9v4.500h-11v-11H7"/><path d="M6.500 9.500l.5-2.500 6-6 2 2-6 6z"/></svg><div class="abs" style="left:643.5px;top:311.5px;width:95.800px;height:.6px;background:#f5f6f9"></div><svg class="abs" style="left:670.0px;top:316.1px;width:7.200px;height:7.200px" viewBox="0 0 16 16"><circle cx="8" cy="8" r="7.500" fill="#6c84f0"/><rect x="7.100" y="6.800" width="1.800" height="5.200" fill="#fff"/><rect x="7.100" y="3.800" width="1.800" height="1.800" fill="#fff"/></svg><div class="abs" style="left:682.2px;top:316.2px;width:.5px;height:7px;background:#eceef3"></div><svg class="abs" style="left:687.0px;top:316.1px;width:7.200px;height:7.200px" viewBox="0 0 16 16" fill="none" stroke="#7086e8" stroke-width="1.500"><circle cx="8" cy="8" r="6.500"/><path d="M3.500 3.500l9 9"/></svg><div class="abs" style="left:699.2px;top:316.2px;width:.5px;height:7px;background:#eceef3"></div><svg class="abs" style="left:704.0px;top:316.1px;width:7.200px;height:7.200px" viewBox="0 0 16 16" fill="none" stroke="#8fa0ee" stroke-width="1.400"><path d="M13.500 9v4.500h-11v-11H7"/><path d="M6.500 9.500l.5-2.500 6-6 2 2-6 6z"/></svg><div class="abs" style="left:643.5px;top:328.4px;width:95.800px;height:.7px;background:#dfe2e8"></div><svg class="abs" style="left:371.5px;top:219.5px;width:5.500px;height:8.500px" viewBox="0 0 11 17"><path d="M1 1v12.500l3-2.800 2.200 5 2-.9-2.200-4.800H10z" fill="#fff" stroke="#222" stroke-width="1"/></svg><div class="t" style="left:640.8px;top:337.1px;font-size:6.200px;color:#555">共 7 条数据</div><div class="abs" style="left:679.5px;top:334.6px;width:11.200px;height:10.900px;border-radius:1.500px;background:#7388f5;color:#fff;font-size:6.200px;line-height:10.900px;text-align:center">1</div><div class="abs" style="left:693.7px;top:334.6px;width:42px;height:10.900px;border-radius:1.500px;border:.6px solid #dcdfe6;color:#555;font-size:6.200px;line-height:9.700px;padding-left:4.500px;white-space:nowrap">10 条/页</div><svg class="abs" style="left:728.0px;top:338.0px;width:4.600px;height:4.600px" viewBox="0 0 10 10" fill="none" stroke="#b0b4bc" stroke-width="1.200"><path d="M1.500 3l3.500 3.500L8.500 3"/></svg></div><div id="cap" class="abs">外业数据一键上传，实现内外业数据贯通</div><svg class="eic" style="top:20.7px" viewBox="0 0 26 26"><defs><linearGradient id="cp1" x1="0" y1="0" x2="1" y2="1"><stop offset="0" stop-color="#2aa8e8"/><stop offset=".5" stop-color="#2464d8"/><stop offset="1" stop-color="#2fd0a0"/></linearGradient></defs><path d="M9 3h6c2 0 3 1 3.600 2.800L21 11h2c2 0 2.600 1.600 2 3.400l-2.400 6C22 22.200 20.800 23 19 23h-7c-2 0-3-1-3.600-2.800L6.500 15H4C2 15 1.400 13.400 2 11.600l2.400-6C5.200 3.800 7 3 9 3z" fill="url(#cp1)"/><path d="M11 7h4l3 12h-4z" fill="#e8f4ff"/></svg><svg class="eic" style="top:41.7px" viewBox="0 0 26 26"><circle cx="11" cy="10.500" r="6.500" fill="#d8ecfb" stroke="#3a78d0" stroke-width="2.400"/><path d="M16 16l6.500 6.500" stroke="#8a4fd0" stroke-width="3.200" stroke-linecap="round"/></svg><svg class="eic" style="top:63.2px" viewBox="0 0 26 26"><path d="M13 4h9v9L12 23l-9-9z" fill="#3a7ae0"/><path d="M13 4h9v5z" fill="#7ab0f5"/><circle cx="18.500" cy="8" r="1.600" fill="#fff"/><path d="M8 18l3 3" stroke="#1a4aa8" stroke-width="2"/></svg><svg class="eic" style="top:84.2px" viewBox="0 0 26 26"><rect x="3" y="9" width="20" height="13" rx="2" fill="#d8482c"/><rect x="3" y="9" width="20" height="5.500" fill="#b8341e"/><path d="M9.500 9V6h7v3" fill="none" stroke="#8a2a18" stroke-width="2"/><rect x="11" y="13" width="4" height="3.500" fill="#f6c84a"/></svg><svg class="eic" style="top:105.2px" viewBox="0 0 26 26"><circle cx="9.500" cy="7" r="3.600" fill="#5a5a78"/><path d="M4 22c0-6 2-9 5.500-9s5.500 3 5.500 9z" fill="#5a5a78"/><path d="M17 5l2 3 3-1-1.500 4.500V20h-4v-8.500z" fill="#6a3fb8"/><rect x="15" y="20" width="8" height="2.500" fill="#4a2a90"/></svg><svg class="eic" style="top:126.2px" viewBox="0 0 26 26"><path d="M13 2.500l9 5.200v10.600l-9 5.200-9-5.200V7.700z" fill="#3a68e0"/><path d="M13 2.500l9 5.200-9 5.300z" fill="#6a48d8"/><circle cx="13" cy="13" r="4" fill="#fff"/></svg><svg class="eic" style="top:147.2px" viewBox="0 0 26 26"><rect x="9" y="4" width="15" height="17" rx="2" fill="#2a8ae0"/><rect x="2" y="7" width="13" height="13" rx="2" fill="#0f5fb8"/><circle cx="8.500" cy="13.500" r="3.200" fill="none" stroke="#fff" stroke-width="2"/></svg><svg class="eic" style="top:167.7px" viewBox="0 0 26 26"><path d="M2 8l22-4-9 18-3-8z" fill="#2a9ae8"/><path d="M2 8l22-4-12 10z" fill="#1a6ac8"/><path d="M12 14l3 8 1-7z" fill="#f0a030"/></svg><div class="t" style="left:783.5px;top:188.4px;font-size:12px;font-weight:300;color:#444">+</div><svg class="eic" style="left:784.500px;top:347.2px;width:9px;height:9px" viewBox="0 0 16 16" fill="none" stroke="#444" stroke-width="1.300"><rect x="1.500" y="2" width="13" height="9.500" rx="1.500"/><path d="M5 14.500h6M6 6l4 3M10 6l-4 3"/></svg><div class="abs" style="left:781.500px;top:363.7px;width:15px;height:.6px;background:#d8d8d8"></div><svg class="eic" style="left:784.500px;top:371.6px;width:9px;height:9px" viewBox="0 0 16 16" fill="none" stroke="#444" stroke-width="1.300"><rect x="1.500" y="2.500" width="13" height="11" rx="2"/><path d="M10.500 2.500v11"/></svg><svg class="eic" style="left:784.500px;top:392.2px;width:9px;height:9px" viewBox="0 0 16 16" fill="none" stroke="#444" stroke-width="1.300"><path d="M12.500 9v3a2 2 0 0 1-2 2H4.500a2 2 0 0 1-2-2V6a2 2 0 0 1 2-2h3M9.500 2.500h4v4M13.500 2.500L8 8"/></svg><svg class="eic" style="left:784.500px;top:413.6px;width:9px;height:9px" viewBox="0 0 16 16" fill="none" stroke="#444" stroke-width="1.300"><path d="M8 1.500l1.800 1.300 2.200-.3.900 2 1.900 1.100-.6 2.100.6 2.100-1.900 1.100-.9 2-2.200-.3L8 14.500l-1.800-1.300-2.200.3-.9-2-1.900-1.100.6-2.100-.6-2.100 1.900-1.100.9-2 2.200.3z"/><circle cx="8" cy="8" r="2.300"/></svg><div id="task" class="abs"><div class="abs" style="left:53px;top:0;width:25.500px;height:20px;background:rgba(255,255,255,.16)"></div><svg class="abs" style="left:8.5px;top:5.9px;width:9px;height:9px" viewBox="0 0 16 16" fill="#fff"><rect x="0" y="0" width="7.400" height="7.400"/><rect x="8.600" y="0" width="7.400" height="7.400"/><rect x="0" y="8.600" width="7.400" height="7.400"/><rect x="8.600" y="8.600" width="7.400" height="7.400"/></svg><svg class="abs" style="left:33.4px;top:4.2px;width:12.5px;height:12.5px" viewBox="0 0 24 24"><path d="M1 4h8l2 2h12v3H1z" fill="#e8a820"/><rect x="1" y="8" width="22" height="13" fill="#f8d060"/><rect x="5" y="14" width="14" height="7" fill="#4a90e0"/><rect x="7" y="16" width="10" height="5" fill="#f8d060"/></svg><svg class="abs" style="left:59.0px;top:3.9px;width:13px;height:13px" viewBox="0 0 26 26"><defs><linearGradient id="eg" x1="0" y1="0" x2="1" y2="1"><stop offset="0" stop-color="#35c8a8"/><stop offset="1" stop-color="#1a78d8"/></linearGradient></defs><circle cx="13" cy="13" r="11" fill="url(#eg)"/><path d="M3 15c0-6 4-9.500 10-9.500 5 0 9 3 9 7 0 2.500-2 4-4.500 4-2 0-3-1-3-2 .6-.6 1-1.400 1-2.400 0-2-1.800-3.600-4.200-3.600C7 8.500 3 11 3 15z" fill="#0e5aa8"/><path d="M9 12c-1.500 2-1.500 5 0 7.500 1.500 2.300 4.500 3.700 7.500 3.200-5 2-11-.5-12.800-5.700C5 14 7 12 9 12z" fill="#5ad8c0"/></svg><svg class="abs" style="left:84.8px;top:4.2px;width:12.5px;height:12.5px" viewBox="0 0 24 24"><circle cx="13" cy="12" r="10" fill="#e8582c"/><path d="M13 2a10 10 0 0 1 10 10H13z" fill="#f8a070"/><rect x="1" y="6" width="12" height="12" rx="1.500" fill="#c03a18"/><text x="4" y="15.500" font-size="9" font-weight="700" fill="#fff" font-family="Liberation Sans,sans-serif">P</text></svg><svg class="abs" style="left:111.0px;top:3.9px;width:13px;height:13px" viewBox="0 0 26 26"><path d="M13 1l12 12-12 12L1 13z" fill="#f4f8ff"/><path d="M13 5.500l3 4.500h-2.500l4 5.500H8.500l4-5.500H10z" fill="#1a68d8"/><path d="M13 20.500l-3.500-4h7z" fill="#1a68d8"/></svg><svg class="abs" style="left:136.8px;top:4.2px;width:12.5px;height:12.5px" viewBox="0 0 24 24"><rect x="6" y="10" width="17" height="12" rx="1.500" fill="#b8d8f8"/><circle cx="10" cy="6.500" r="4.500" fill="#f4f4f4"/><path d="M2 20c0-5.500 3-8.500 8-8.500s8 3 8 8.500z" fill="#3a8ae0"/><circle cx="17.500" cy="17" r="4" fill="#e8f4ff" stroke="#5a9ae8" stroke-width="1.200"/></svg><svg class="abs" style="left:162.4px;top:4.2px;width:12.5px;height:12.5px" viewBox="0 0 24 24"><rect x="1" y="2" width="22" height="20" fill="#e8e4d0"/><rect x="1" y="2" width="10" height="9" fill="#5aa84a"/><rect x="13" y="12" width="10" height="10" fill="#4a88c8"/><rect x="12" y="2" width="11" height="9" fill="#d85040"/><rect x="3" y="13" width="3" height="9" fill="#d85040"/><rect x="7.500" y="15" width="3" height="7" fill="#f0b030"/></svg><svg class="abs" style="left:187.9px;top:4.2px;width:12.5px;height:12.5px" viewBox="0 0 24 24"><rect x="1" y="1" width="22" height="22" rx="2" fill="#d8202c"/><path d="M12 5l7 14h-4.500L12 13.500 9.500 19H5z" fill="#8a0a14"/><path d="M12 5l3.500 7-3.500 2-3.500-2z" fill="#f06a70"/></svg><svg class="abs" style="left:214.2px;top:4.2px;width:12.5px;height:12.5px" viewBox="0 0 24 24"><rect x="1" y="1" width="22" height="22" rx="5" fill="#111"/><path d="M6 9l3.500-2.200h5L18 9l-4.500 3 4.500 3-3.500 2.200h-5L6 15l4.500-3z" fill="none" stroke="#fff" stroke-width="2" stroke-linejoin="round"/></svg><div class="abs" style="left:30.7px;top:19.200px;width:18px;height:.8px;background:#8fd0e4"></div><div class="abs" style="left:56.5px;top:19.200px;width:18px;height:.8px;background:#8fd0e4"></div><div class="abs" style="left:82.0px;top:19.200px;width:18px;height:.8px;background:#8fd0e4"></div><div class="abs" style="left:108.5px;top:19.200px;width:18px;height:.8px;background:#8fd0e4"></div><div class="abs" style="left:134.0px;top:19.200px;width:18px;height:.8px;background:#8fd0e4"></div><div class="abs" style="left:159.7px;top:19.200px;width:18px;height:.8px;background:#8fd0e4"></div><div class="abs" style="left:185.2px;top:19.200px;width:18px;height:.8px;background:#8fd0e4"></div><div class="abs" style="left:211.5px;top:19.200px;width:18px;height:.8px;background:#8fd0e4"></div><svg class="abs" style="left:657.2px;top:6.9px;width:7px;height:7px" viewBox="0 0 14 14" fill="none" stroke="#fff" stroke-width="1.500"><path d="M2 10l5-5.500L12 10"/></svg><svg class="abs" style="left:669.2px;top:6.4px;width:8px;height:8px" viewBox="0 0 16 16"><rect x="0" y="4" width="13.500" height="8.500" rx="1" fill="#fff"/><rect x="14" y="6.500" width="2" height="3.500" fill="#fff"/></svg><svg class="abs" style="left:681.7px;top:6.4px;width:8px;height:8px" viewBox="0 0 16 16" fill="none" stroke="#b8c4c0" stroke-width="1.400"><path d="M1.500 13.500A11 11 0 0 1 12.500 2.500M5 13.500a7.500 7.500 0 0 1 7.500-7.500M8.500 13.500a4 4 0 0 1 4-4"/><circle cx="12.500" cy="13.500" r="1" fill="#fff"/></svg><svg class="abs" style="left:693.5px;top:5.9px;width:9px;height:9px" viewBox="0 0 18 18" fill="none" stroke="#fff" stroke-width="1.300"><path d="M1.500 7h3l4-3.500v11L4.500 11h-3z"/><path d="M11.500 6.500l5 5M16.500 6.500l-5 5"/></svg><div class="t" style="left:706.200px;top:6px;font-size:9px;color:#fff;font-weight:500">英</div><svg class="abs" style="left:720.8px;top:6.2px;width:8.5px;height:8.5px" viewBox="0 0 16 16"><rect x="1" y="1" width="14" height="14" rx="1.500" fill="#fff"/><rect x="4" y="4" width="3" height="3" fill="#1c3228"/><rect x="4" y="9" width="3" height="3" fill="#1c3228"/><rect x="9" y="4" width="3" height="8" fill="#1c3228"/></svg><div class="t" style="left:745.300px;top:2.400px;font-size:6.700px;color:#fff">16:12</div><div class="t" style="left:736.200px;top:12.100px;font-size:6.700px;color:#fff">2023/11/24</div><svg class="abs" style="left:779px;top:4.600px;width:11px;height:12px" viewBox="0 0 22 24"><path d="M1 1h18v14H10l-4 4v-4H1z" fill="#fff"/><path d="M4.500 5h11M4.500 8h11M4.500 11h7" stroke="#1c3a2c" stroke-width="1.300"/><circle cx="16" cy="18" r="5" fill="#1c3228" stroke="#fff" stroke-width="1.200"/><text x="14.200" y="20.800" font-size="7.500" font-family="Liberation Sans,sans-serif" fill="#fff">1</text></svg></div></div>
</body>
</html>
